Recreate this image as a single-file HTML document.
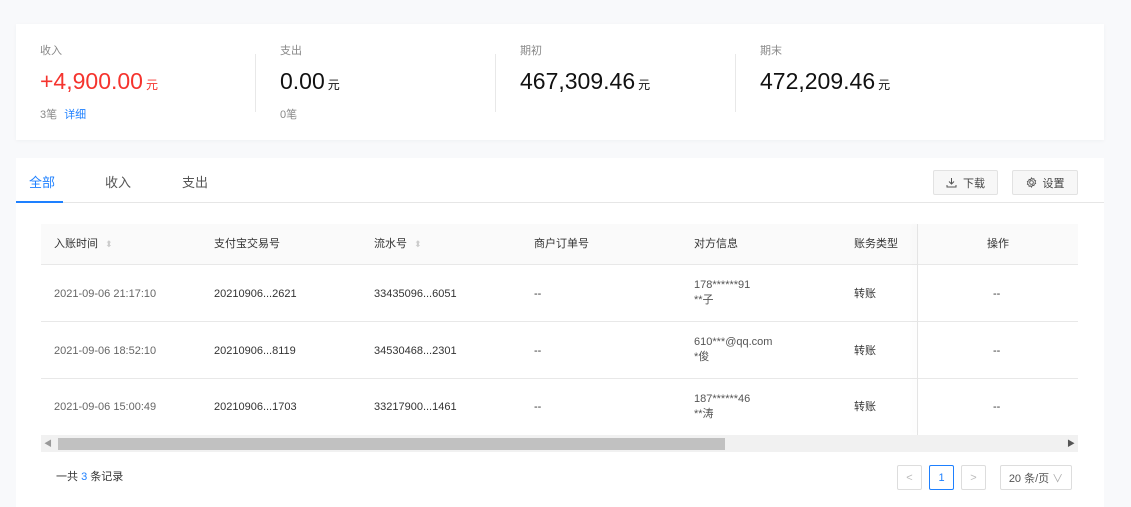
<!DOCTYPE html>
<html><head><meta charset="utf-8"><style>
*{margin:0;padding:0;box-sizing:border-box}
body{width:1131px;height:507px;background:#f8f9fb;font-family:"Liberation Sans","Noto Sans CJK SC",sans-serif;position:relative;overflow:hidden;color:#333}
.card{position:absolute;background:#fff}
.a{position:absolute;white-space:nowrap}
.lbl{font-size:11px;color:#888;line-height:14px}
.big{font-size:23px;color:#111;line-height:28px}
.big small{font-size:12px;margin-left:3px}
.vl{position:absolute;width:1px;height:58px;background:#e8e8e8}
.t{font-size:11px;color:#333;line-height:14px}
.row{position:absolute;left:41px;width:1037px;height:57px;border-bottom:1px solid #e8e8e8;background:#fff}
.btn{position:absolute;top:170px;height:25px;border:1px solid #e2e2e2;background:#f7f7f7;border-radius:2px;font-size:11px;color:#444;display:flex;align-items:center;justify-content:center;gap:6px}
.pg{position:absolute;top:465px;height:25px;border:1px solid #ddd;border-radius:2px;font-size:11px;color:#bbb;display:flex;align-items:center;justify-content:center;background:#fff}
</style></head><body>
<div class="card" style="left:16px;top:24px;width:1088px;height:116px;box-shadow:0 1px 4px rgba(0,0,0,0.04)">
<div class="a lbl" style="left:24px;top:20px">收入</div>
<div class="a big" style="left:24px;top:43px;color:#f5342e">+4,900.00<small>元</small></div>
<div class="a lbl" style="left:24px;top:84px">3笔 <span style="color:#1e80ff;margin-left:4px">详细</span></div>
<div class="vl" style="left:239px;top:30px"></div>
<div class="a lbl" style="left:264px;top:20px">支出</div>
<div class="a big" style="left:264px;top:43px">0.00<small>元</small></div>
<div class="a lbl" style="left:264px;top:84px">0笔</div>
<div class="vl" style="left:479px;top:30px"></div>
<div class="a lbl" style="left:504px;top:20px">期初</div>
<div class="a big" style="left:504px;top:43px">467,309.46<small>元</small></div>
<div class="vl" style="left:719px;top:30px"></div>
<div class="a lbl" style="left:744px;top:20px">期末</div>
<div class="a big" style="left:744px;top:43px">472,209.46<small>元</small></div>
</div>
<div class="card" style="left:16px;top:158px;width:1088px;height:349px"></div>
<div class="a" style="left:29px;top:175px;font-size:13px;line-height:16px;color:#1e80ff">全部</div>
<div class="a" style="left:105px;top:175px;font-size:13px;line-height:16px;color:#555">收入</div>
<div class="a" style="left:182px;top:175px;font-size:13px;line-height:16px;color:#555">支出</div>
<div class="a" style="left:16px;top:202px;width:1088px;height:1px;background:#e6e6e6"></div>
<div class="a" style="left:16px;top:201px;width:47px;height:2px;background:#1e80ff"></div>
<div class="btn" style="left:933px;width:65px"><svg width="11" height="11" viewBox="0 0 11 11" fill="none" stroke="#555" stroke-width="1"><path d="M5.5 1v6M3 4.5l2.5 2.5 2.5-2.5M1 8v2h9V8"/></svg>下载</div>
<div class="btn" style="left:1012px;width:66px"><svg width="11" height="11" viewBox="0 0 12 12" fill="none" stroke="#555" stroke-width="1"><circle cx="6" cy="6" r="2"/><path d="M6 1l1 1.3 1.6-.4.4 1.6 1.5.6-.6 1.5.6 1.5-1.5.6-.4 1.6-1.6-.4L6 11l-1-1.3-1.6.4-.4-1.6-1.5-.6.6-1.5-.6-1.5 1.5-.6.4-1.6 1.6.4z"/></svg>设置</div>
<div class="a" style="left:41px;top:224px;width:1037px;height:41px;background:#fafafa;border-bottom:1px solid #e8e8e8"></div>
<div class="a t" style="left:54px;top:237px">入账时间 <span style="color:#ccc;font-size:9px;margin-left:4px">⬍</span></div>
<div class="a t" style="left:214px;top:237px">支付宝交易号</div>
<div class="a t" style="left:374px;top:237px">流水号 <span style="color:#ccc;font-size:9px;margin-left:4px">⬍</span></div>
<div class="a t" style="left:534px;top:237px">商户订单号</div>
<div class="a t" style="left:694px;top:237px">对方信息</div>
<div class="a t" style="left:854px;top:237px">账务类型</div>
<div class="a t" style="left:987px;top:237px">操作</div>

<div class="row" style="top:265px"></div>
<div class="row" style="top:322px"></div>
<div class="row" style="top:379px"></div>

<div class="a t" style="left:54px;top:287px;color:#666">2021-09-06 21:17:10</div>
<div class="a t" style="left:214px;top:287px">20210906...2621</div>
<div class="a t" style="left:374px;top:287px">33435096...6051</div>
<div class="a t" style="left:534px;top:287px">--</div>
<div class="a t" style="left:694px;top:278px;line-height:15px;color:#555">178******91<br>**子</div>
<div class="a t" style="left:854px;top:287px">转账</div>
<div class="a t" style="left:993px;top:287px">--</div>

<div class="a t" style="left:54px;top:344px;color:#666">2021-09-06 18:52:10</div>
<div class="a t" style="left:214px;top:344px">20210906...8119</div>
<div class="a t" style="left:374px;top:344px">34530468...2301</div>
<div class="a t" style="left:534px;top:344px">--</div>
<div class="a t" style="left:694px;top:335px;line-height:15px;color:#555">610***@qq.com<br>*俊</div>
<div class="a t" style="left:854px;top:344px">转账</div>
<div class="a t" style="left:993px;top:344px">--</div>

<div class="a t" style="left:54px;top:400px;color:#666">2021-09-06 15:00:49</div>
<div class="a t" style="left:214px;top:400px">20210906...1703</div>
<div class="a t" style="left:374px;top:400px">33217900...1461</div>
<div class="a t" style="left:534px;top:400px">--</div>
<div class="a t" style="left:694px;top:392px;line-height:15px;color:#555">187******46<br>**涛</div>
<div class="a t" style="left:854px;top:400px">转账</div>
<div class="a t" style="left:993px;top:400px">--</div>

<div class="a" style="left:917px;top:224px;width:1px;height:211px;background:#e4e4e4;box-shadow:-3px 0 6px rgba(0,0,0,0.08)"></div>

<div class="a" style="left:41px;top:435px;width:1037px;height:17px;background:#f1f1f1"></div>
<div class="a" style="left:58px;top:438px;width:667px;height:12px;background:#c1c1c1"></div>
<div class="a" style="left:44px;top:438px;font-size:8px;color:#999">◀</div>
<div class="a" style="left:1067px;top:438px;font-size:8px;color:#555">▶</div>

<div class="a t" style="left:56px;top:470px">一共 <span style="color:#1e80ff">3</span> 条记录</div>
<div class="pg" style="left:897px;width:25px">&lt;</div>
<div class="pg" style="left:929px;width:25px;border-color:#1e80ff;color:#1e80ff">1</div>
<div class="pg" style="left:961px;width:25px">&gt;</div>
<div class="pg" style="left:1000px;width:72px;color:#555">20 条/页 <span style="color:#aaa;margin-left:3px">∨</span></div>
</body></html>
